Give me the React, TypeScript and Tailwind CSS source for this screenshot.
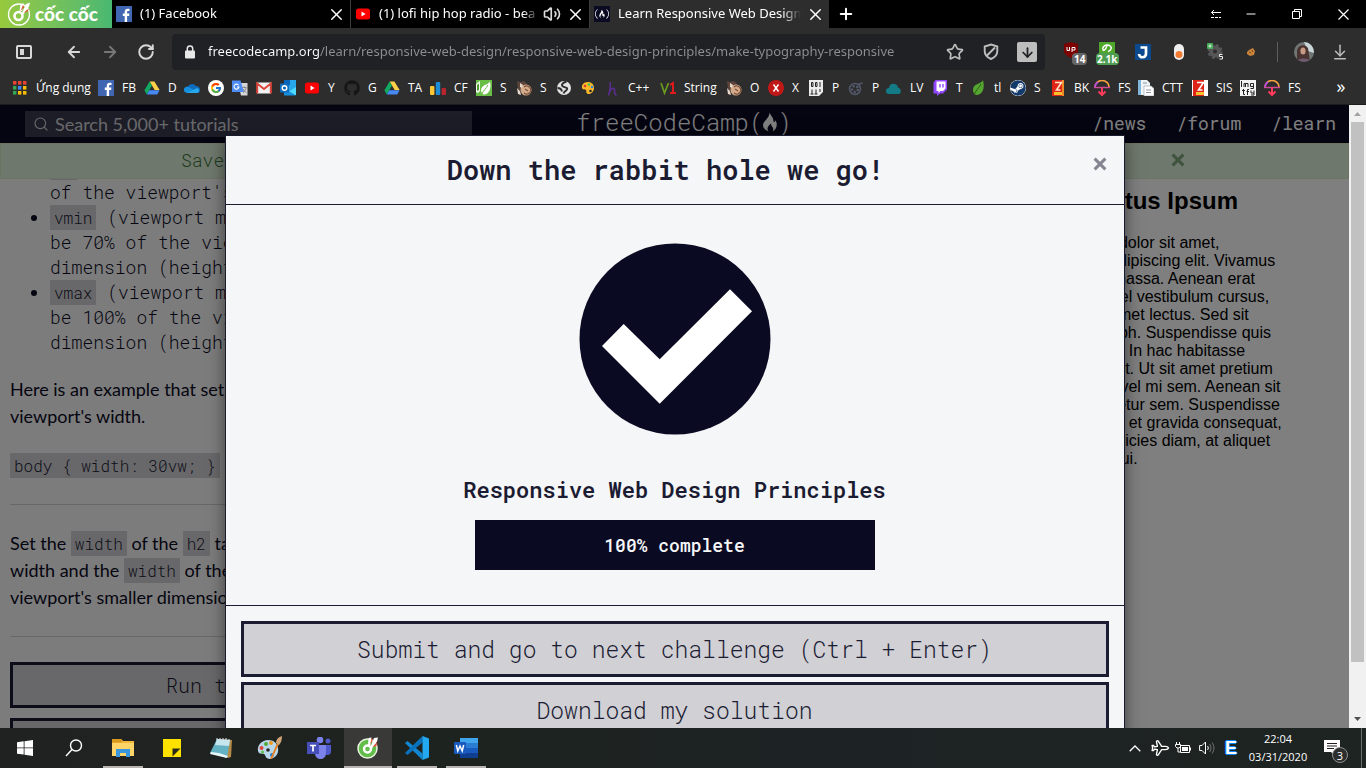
import React from "react";
import type { ReactNode } from "react";
import { FaFreeCodeCamp, FaGithub, FaSteam } from "react-icons/fa";
import { FcGoogle } from "react-icons/fc";
import { ArrowDown, ArrowDownToLine, ArrowLeft, ArrowRight, Minus, Plane, Plus, RotateCw, Search, Star, Volume2, X } from "lucide-react";

/* ---------- small drawings ---------- */

const CocMark = () => (
  <svg width="24" height="24" viewBox="0 0 24 24" aria-hidden="true">
    <circle cx="12" cy="12.500" r="10.500" fill="none" stroke="#fff" strokeWidth="1.300" />
    <circle cx="11.500" cy="14" r="4" fill="none" stroke="#fff" strokeWidth="2.600" />
    <path d="M12.500 9.500 13.500 2 17 1.600 15 9z" fill="#fff" />
    <path d="M15 11 19 2l4-1.500-1 4-5.500 8z" fill="#fff" />
    <path d="M13.500 9 16 3l1 2zM16.500 11 22 6.500l-1.500 3z" fill="#e8402c" />
  </svg>
);

const Facebook = () => (
  <svg width="16" height="16" viewBox="0 0 16 16" aria-hidden="true">
    <rect width="16" height="16" fill="#4267b2" />
    <path d="M8.700 16V10H6.800V7.600h1.900V6c0-2 1.200-3.200 3-3.200.9 0 1.600.1 1.800.1v2.200h-1.200c-1 0-1.200.5-1.200 1.200v1.300h2.300L13.100 10h-2v6z" fill="#fff" />
  </svg>
);

const YouTube = () => (
  <svg width="16" height="16" viewBox="0 0 16 16" aria-hidden="true">
    <rect x="1" y="2.500" width="14" height="11" rx="2.500" fill="#f00" />
    <path d="M6.500 5.600 10.600 8 6.500 10.400z" fill="#fff" />
  </svg>
);

const Drive = () => (
  <svg width="16" height="16" viewBox="0 0 16 16" aria-hidden="true">
    <path d="M5.600 1.500h4.800L15.600 10h-4.900z" fill="#ffcf48" />
    <path d="M5.600 1.500 8 5.600 2.800 14.500 .4 10.300z" fill="#11a861" />
    <path d="M5.300 10.200h10.300L13.200 14.500H2.800z" fill="#4688f4" />
  </svg>
);

const AppsGrid = () => (
  <svg width="14" height="14" viewBox="0 0 14 14" aria-hidden="true">
    {["#ea4335", "#ea4335", "#ea4335", "#34a853", "#4285f4", "#fbbc05", "#34a853", "#fbbc05", "#fbbc05"].map((c, i) => (
      <rect key={i} x={(i % 3) * 5} y={Math.floor(i / 3) * 5} width="3.400" height="3.600" fill={c} />
    ))}
  </svg>
);

const OneDrive = () => (
  <svg width="16" height="16" viewBox="0 0 16 16" aria-hidden="true">
    <path d="M4 6.600A4.600 4.600 0 0 1 12 6a3.800 3.800 0 0 1 2.600 6.800H4z" fill="#0f6cbd" />
    <path d="M3.200 13a3.200 3.200 0 1 1 1.400-6l9.800 5.800z" fill="#1490df" />
    <path d="M3 13l7-3.500 3-1.600a2.700 2.700 0 0 1 .3 5.100z" fill="#28a8ea" />
  </svg>
);

const Google = () => (
  <svg width="16" height="16" viewBox="0 0 16 16" aria-hidden="true">
    <circle cx="8" cy="8" r="8" fill="#fff" />
    <g transform="translate(2 2)">
      <FcGoogle size={12} />
    </g>
  </svg>
);

const Translate = () => (
  <svg width="16" height="16" viewBox="0 0 16 16" aria-hidden="true">
    <path d="M6 3h9.500v12.500H9z" fill="#d6d6d6" />
    <path d="M0 .5h8.500L12 12H0z" fill="#4e8df5" />
    <path d="M6.600 5.200A2.500 2.500 0 1 0 7 7H5" fill="none" stroke="#fff" strokeWidth="1.100" />
    <path d="M10.500 7.500h4M12.500 6.500v1M11 12.500c2-1 2.800-2.500 3-5M11.500 9c.7 2 1.500 3 3 3.800" fill="none" stroke="#7a7a7a" strokeWidth=".8" />
  </svg>
);

const Gmail = () => (
  <svg width="16" height="16" viewBox="0 0 16 16" aria-hidden="true">
    <rect x="1" y="2.500" width="14" height="11" fill="#f2f2f2" />
    <path d="M1.200 13.500V3.500L8 9l6.800-5.500v10" fill="none" stroke="#db4437" strokeWidth="2" />
  </svg>
);

const Outlook = () => (
  <svg width="16" height="16" viewBox="0 0 16 16" aria-hidden="true">
    <rect x="4" y="0" width="12" height="15" fill="#28a8ea" />
    <path d="M4 0h6v5H4z" fill="#0364b8" />
    <path d="M16 7v8H4z" fill="#50d9ff" />
    <path d="M4 8l12 7.500H4z" fill="#1490df" />
    <rect x="0" y="3.500" width="9" height="9" fill="#0f6cbd" />
    <circle cx="4.500" cy="8" r="2.300" fill="none" stroke="#fff" strokeWidth="1.400" />
  </svg>
);

const Bars = () => (
  <svg width="16" height="16" viewBox="0 0 16 16" aria-hidden="true">
    <rect x="0" y="6" width="4.400" height="9" rx="1" fill="#ffc736" />
    <rect x="5.800" y="2" width="4.400" height="13" rx="1" fill="#1f8dd6" />
    <rect x="11.600" y="8" width="4.400" height="7" rx="1" fill="#b8252f" />
  </svg>
);

const Spring = () => (
  <svg width="16" height="16" viewBox="0 0 16 16" aria-hidden="true">
    <rect width="16" height="16" fill="#68bd45" />
    <path d="M0 4l4-3v10l-2 2-2-1z" fill="#f2f8ee" />
    <path d="M1 5 3 3.500v6.500l-2 1z" fill="#4f9a32" />
    <path d="M14 1.500C12.500 5 6 4 5 10c0 2 1 4 2.500 4.500 6 0 8-6.500 6.500-13z" fill="#fff" />
    <path d="M5.500 14.500C7.500 10 10 9 12 5" stroke="#68bd45" fill="none" />
  </svg>
);

const Snail = () => (
  <svg width="16" height="16" viewBox="0 0 16 16" aria-hidden="true">
    <path d="M1 1l3 1 4-1 4 4-5 7-5-3z" fill="#5d443b" />
    <circle cx="10" cy="10" r="5.500" fill="#d3ab8a" />
    <path d="M8 7a4 4 0 1 1 0 6M9 9l3 2" fill="none" stroke="#7b513a" strokeWidth="1.200" />
    <path d="M1 8l3 3 1 4-3-1zM4 3l3 2-1 3-2-1z" fill="#e8d7ca" />
  </svg>
);

const Globe = () => (
  <svg width="16" height="16" viewBox="0 0 16 16" aria-hidden="true">
    <circle cx="8" cy="8" r="7" fill="#e2e2e2" />
    <path d="M10.500 1.500C6 3 5 5 7 6.500c2.500 1.200 5 1 4 3-1 1.500-3 2-3.500 4M1.500 8c2 0 4 1 4.500 3.500" fill="none" stroke="#2d2d2d" strokeWidth="1.900" />
  </svg>
);

const Palette = () => (
  <svg width="16" height="16" viewBox="0 0 16 16" aria-hidden="true">
    <path d="M8 2C3.500 2 1.500 5 2 8c.5 2 3 1 4 2 1 1-1 3 2 4 3 .5 6-2.500 6-6s-2.500-6-6-6z" fill="#fbb829" />
    <circle cx="5" cy="6" r="1.200" fill="#d33" />
    <circle cx="9" cy="4.500" r="1.200" fill="#3c5" />
    <circle cx="12" cy="7" r="1.200" fill="#28d" />
    <circle cx="10.500" cy="11" r="1.300" fill="#2d2d2d" />
  </svg>
);

const Hook = () => (
  <svg width="16" height="16" viewBox="0 0 16 16" aria-hidden="true">
    <path d="M6 2C7 7 6 11 4.500 15.500M5.500 12C8 7 11 7.500 10.500 10.500c-.3 2 .5 4 2 5" fill="none" stroke="#5c2d91" strokeWidth="1.600" />
  </svg>
);

const VOne = () => (
  <svg width="16" height="16" viewBox="0 0 16 16" aria-hidden="true">
    <path d="M1 3l3.500 10L8.500 3" fill="none" stroke="#6b9b1e" strokeWidth="1.700" />
    <path d="M10 5l3-2v10M10 13h6" fill="none" stroke="#e01a1a" strokeWidth="2" />
  </svg>
);

const RedX = () => (
  <svg width="16" height="16" viewBox="0 0 16 16" aria-hidden="true">
    <circle cx="8" cy="8" r="8" fill="#c21717" />
    <path d="M5.500 4.500l5 7M10.500 4.500l-5 7" stroke="#fff" strokeWidth="1.500" />
  </svg>
);

const Binary = () => (
  <svg width="16" height="16" viewBox="0 0 16 16" aria-hidden="true">
    <path d="M1 0h14v12l-4 4H1z" fill="#ececec" />
    <path d="M3.500 2.500h1.500v4H3.500zM7.500 2.500H9v4H7.500zM12 2v5M4 9.500v4.500M8 9.500v4.500M12 9v3M2.500 14h3M6.500 14h3" fill="none" stroke="#222" />
  </svg>
);

const Reel = () => (
  <svg width="16" height="16" viewBox="0 0 16 16" aria-hidden="true">
    <circle cx="7" cy="9" r="5.500" fill="none" stroke="#52586a" strokeWidth="1.500" />
    <circle cx="7" cy="9" r="3" fill="none" stroke="#52586a" strokeWidth="2.500" strokeDasharray="2.200 1.570" />
    <path d="M10 4.500 14.500 3" stroke="#52586a" strokeWidth="1.700" />
  </svg>
);

const Cloud = () => (
  <svg width="16" height="16" viewBox="0 0 16 16" aria-hidden="true">
    <path d="M3 14a3 3 0 0 1 0-6 4 4 0 0 1 5-4 4 4 0 0 1 4 3.500A3.500 3.500 0 0 1 13 14z" fill="#137b86" />
  </svg>
);

const Twitch = () => (
  <svg width="16" height="16" viewBox="0 0 16 16" aria-hidden="true">
    <path d="M3.500 0H15v9.500L11 13.500H8L5 16V13.500H1.500v-11z" fill="#9146ff" />
    <path d="M4.500 1.500h9V8.500l-2.500 2.500H8.500L6.500 13v-2h-2z" fill="#fff" />
    <path d="M8 4v3.500M11 4v3.500" stroke="#9146ff" strokeWidth="1.400" />
  </svg>
);

const Leaf = () => (
  <svg width="16" height="16" viewBox="0 0 16 16" aria-hidden="true">
    <path d="M13 0c-1 4-10 3-10 10 0 2 1 4 3 5 7 0 9-7 7-15z" fill="#55a630" />
    <path d="M4 15C6 10 9 8 11 4" stroke="#2d5d17" fill="none" />
  </svg>
);

const BookZ = ({ wide = false }: { wide?: boolean }) => (
  <svg width="16" height="16" viewBox="0 0 16 16" aria-hidden="true">
    <rect x={wide ? 0 : 2} y="0" width={wide ? 16 : 12} height="16" fill={wide ? "#fff" : "#f08a24"} />
    <rect x={wide ? 1 : 2} y="0" width={wide ? 11 : 10} height="16" fill="#df2418" />
    <path d="M5 2.500h6.500l-5 7.500h4" fill="none" stroke={wide ? "#fff" : "#ffe9c8"} strokeWidth="1.600" />
    <rect x="4" y="12" width="8" height="3" fill="#f6c12c" />
  </svg>
);

const Umbrella = () => (
  <svg width="16" height="16" viewBox="0 0 16 16" aria-hidden="true">
    <path d="M1 7a7 6.500 0 0 1 14 0" fill="none" stroke="#f8a13c" strokeWidth="1.600" />
    <path d="M1 7a7 6.500 0 0 1 3-5" fill="none" stroke="#b94ae0" strokeWidth="1.600" />
    <path d="M0 7.500h16" stroke="#d04a9a" strokeWidth="1.400" />
    <path d="M8 7.500v6M4.500 11.500 8 15l3.500-3.500" fill="none" stroke="#ff3b5c" strokeWidth="2" />
  </svg>
);

const Pages = () => (
  <svg width="16" height="16" viewBox="0 0 16 16" aria-hidden="true">
    <path d="M0 0h9l3 3v12H0z" fill="#eef3f6" />
    <rect width="3" height="15" fill="#7fb6d9" />
    <path d="M6 6h7l3 2.500V16H6z" fill="#fff" stroke="#a9b4bb" strokeWidth=".8" />
    <path d="M8 10h5M8 12.500h5M5 3h4" stroke="#8b99a3" />
  </svg>
);

const Lmgtfy = () => (
  <svg width="16" height="16" viewBox="0 0 16 16" aria-hidden="true">
    <rect width="16" height="16" fill="#f3f3f3" />
    <path d="M1.500 1v6M4 7V3.500h1.500V7M5.500 3.500H8V7M10.500 3.500h3V8.500h-3M10.500 3.500V6.500h3M2 10.500h3M3.500 9v5.500h1.500M9 9.500H7.500v5.500M6.500 11.500h2.500M11 10.500v2.500h3M14 10.500V15h-3" fill="none" stroke="#222" />
  </svg>
);

const Lock = () => (
  <svg width="10" height="14" viewBox="0 0 10 14" aria-hidden="true">
    <path d="M2.300 6V3.800a2.700 2.700 0 0 1 5.400 0V6" fill="none" stroke="#e8e8e8" strokeWidth="1.500" />
    <rect x="0" y="5.500" width="10" height="8" rx="1" fill="#e8e8e8" />
  </svg>
);

const SidebarIcon = () => (
  <svg width="16" height="14" viewBox="0 0 16 14" aria-hidden="true">
    <rect x="1" y="1" width="14" height="12" rx="1" fill="none" stroke="#d8d8d8" strokeWidth="2" />
    <rect x="4" y="4" width="4" height="6" fill="#d8d8d8" />
  </svg>
);

const ShieldOff = () => (
  <svg width="16" height="18" viewBox="0 0 16 18" aria-hidden="true">
    <path d="M8 1.500 14.300 3.500V8c0 4-2.500 6.500-6.300 8-3.800-1.500-6.300-4-6.300-8V3.500z" fill="none" stroke="#bdbdbd" strokeWidth="1.900" />
    <path d="M3.500 13 12 4.500" stroke="#bdbdbd" strokeWidth="1.900" />
  </svg>
);

const Gear = () => (
  <svg width="18" height="18" viewBox="0 0 18 18" aria-hidden="true">
    <circle cx="9" cy="8.500" r="4" fill="none" stroke="#565656" strokeWidth="4" />
    <circle cx="9" cy="8.500" r="6.500" fill="none" stroke="#565656" strokeWidth="2" strokeDasharray="3 2.100" />
    <rect x="1" y="0" width="6" height="6" rx="1" fill="#4dab5c" />
    <circle cx="4" cy="3" r="1.500" fill="#b6e8bd" />
    <path d="M16.500 11.500h-3v2h3v2.500h-3" stroke="#eee" fill="none" />
  </svg>
);

const Flame = () => (
  <svg width="14" height="20" viewBox="0 0 14 19" aria-hidden="true">
    <path d="M6.500 0c1 3 4 5 4 8.500 0 1 .2 1.500 1 1 .5-.3.500-1.200.2-2C13.500 9 14 11 13.700 13c-.3 2.500-1.700 4.500-4 6 .8-1.800.8-3.300-.5-4.700-.9-1-1.200-2-1-3.500-1.700 1.300-3.700 3.500-3.700 5.400 0 1 .3 1.900 1 2.800C2 17.500 0 15.500 0 12.800 0 8.500 6.500 6 6.500 0z" fill="#fff" />
  </svg>
);

/* ---------- browser chrome ---------- */

type TabProps = { icon: ReactNode; title: string; active?: boolean; sound?: boolean };

const Tab = ({ icon, title, active, sound }: TabProps) => (
  <div className={`flex h-7 w-[239px] min-w-0 shrink items-center gap-2 pr-[7px] pl-1 ${active ? "bg-[#2d2d2d]" : "border-r border-[#3c3c3c] bg-black"}`}>
    <button className="flex min-w-0 flex-1 items-center gap-2 text-left">
      <span className="shrink-0">{icon}</span>
      <span className="flex-1 overflow-hidden mask-r-from-90% whitespace-nowrap">{title}</span>
    </button>
    {sound && <Volume2 size={18} strokeWidth={2.200} className="-ml-1 shrink-0 text-[#dcdcdc]" />}
    <button aria-label={`Close ${title}`} className="shrink-0">
      <X size={19} strokeWidth={1.800} className="-mx-[3px]" />
    </button>
  </div>
);

const TabStrip = () => (
  <header className="flex h-7 shrink-0 items-center bg-black font-['Noto_Sans',sans-serif] text-[13px] text-white">
    <button aria-label="Cốc Cốc menu" className="flex h-7 w-28 shrink-0 items-center gap-1 bg-linear-to-r from-[#97c93d] to-[#48b871] pl-[7px]">
      <CocMark />
      <span className="font-['Lato',sans-serif] text-[19px] leading-7 font-black whitespace-nowrap">cốc cốc</span>
    </button>
    <Tab icon={<Facebook />} title="(1) Facebook" />
    <Tab icon={<YouTube />} title="(1) lofi hip hop radio - bea" sound />
    <Tab
      icon={
        <span className="flex size-4 items-center justify-center bg-[#0a0a23]">
          <FaFreeCodeCamp size={14} />
        </span>
      }
      title="Learn Responsive Web Design"
      active
    />
    <button aria-label="New tab" className="ml-2 shrink-0">
      <Plus size={18} strokeWidth={2.600} />
    </button>
    <div className="ml-auto flex shrink-0 items-center">
      <button aria-label="Tab options" className="flex w-6 justify-center">
        <svg width="12" height="10" viewBox="0 0 12 10" aria-hidden="true">
          <path d="M1.500 3.500H11M4 1 1.500 3.500 4 6" fill="none" stroke="#fff" />
          <path d="M1 8.500h10" stroke="#fff" strokeDasharray="3 1" />
        </svg>
      </button>
      <button aria-label="Minimize" className="flex w-[46px] justify-center">
        <Minus size={14} strokeWidth={1.700} />
      </button>
      <button aria-label="Restore" className="flex w-[46px] justify-center">
        <svg width="10" height="10" viewBox="0 0 10 10" aria-hidden="true">
          <path d="M.500 2.500h7v7h-7zM2.500 2.500v-2h7v7h-2" fill="none" stroke="#fff" />
        </svg>
      </button>
      <button aria-label="Close window" className="flex w-[46px] justify-center">
        <svg width="11" height="11" viewBox="0 0 11 11" aria-hidden="true">
          <path d="M.500 .500l10 10M10.500 .500l-10 10" stroke="#fff" strokeWidth="1.200" />
        </svg>
      </button>
    </div>
  </header>
);

const ToolButton = ({ label, children }: { label: string; children: ReactNode }) => (
  <button aria-label={label} className="relative flex h-9 w-9 shrink-0 items-center justify-center">
    {children}
  </button>
);

const Toolbar = () => (
  <div className="flex h-12 shrink-0 items-center bg-[#2d2d2d] pr-2 text-[#d8d8d8]">
    <button aria-label="Sidebar" className="mr-2 flex w-12 shrink-0 justify-center">
      <SidebarIcon />
    </button>
    <ToolButton label="Back">
      <ArrowLeft size={18} strokeWidth={2.400} />
    </ToolButton>
    <ToolButton label="Forward">
      <ArrowRight size={18} strokeWidth={2.400} className="text-[#777]" />
    </ToolButton>
    <ToolButton label="Reload">
      <RotateCw size={18} strokeWidth={2.600} />
    </ToolButton>
    <div className="ml-2 flex h-9 min-w-0 flex-1 items-center rounded bg-[#202124] pr-2 pl-[13px]">
      <Lock />
      <input
        aria-label="Address"
        readOnly
        value="freecodecamp.org/learn/responsive-web-design/responsive-web-design-principles/make-typography-responsive"
        className="ml-[13px] min-w-0 flex-1 bg-[linear-gradient(90deg,#fff_111px,#8c8f93_111px)] bg-clip-text font-['Noto_Sans',sans-serif] text-[13px] text-transparent outline-none"
      />
      <button aria-label="Bookmark" className="flex w-9 justify-center">
        <Star size={18} strokeWidth={2.200} className="text-[#bdbdbd]" />
      </button>
      <button aria-label="Blocking" className="flex w-9 justify-center">
        <ShieldOff />
      </button>
      <button aria-label="Save media" className="ml-2 flex size-5 items-center justify-center rounded-xs bg-[#bdbdbd] text-[#202124]">
        <ArrowDown size={15} strokeWidth={2.800} />
      </button>
    </div>
    <div className="ml-2 flex shrink-0 items-center">
      <ToolButton label="Blocker">
        <svg width="16" height="16" viewBox="0 0 16 16" className="-mt-1" aria-hidden="true">
          <path d="M8 0l7 2v7c0 3-4 5.500-7 7-3-1.500-7-4-7-7V2z" fill="#7d0000" />
          <path d="M4 5v3.500h2.500V5M9 10V5.500h3v2.500H9" fill="none" stroke="#fff" />
        </svg>
        <span className="absolute top-[19px] left-[19px] rounded-sm bg-[#666] px-0.5 text-[10px] leading-3 font-bold text-white">14</span>
      </ToolButton>
      <ToolButton label="Reader">
        <svg width="16" height="16" viewBox="0 0 16 16" className="-mt-1" aria-hidden="true">
          <rect width="16" height="16" fill="#4ea72a" />
          <path d="M8 3.500C6.500 8 5 9 4 8c-1-2 1-5 4-5s5 2 4 4c-.5 1.500-1.500 2-3 2.500" fill="none" stroke="#fff" strokeWidth="1.500" />
        </svg>
        <span className="absolute top-[19px] left-[7px] rounded-sm bg-[#4f9d53] px-px text-[10px] leading-3 font-bold text-white">2.1k</span>
      </ToolButton>
      <ToolButton label="J extension">
        <svg width="16" height="16" viewBox="0 0 16 16" aria-hidden="true">
          <rect width="16" height="16" fill="#0b4a8f" />
          <path d="M5.500 3.500H11v6a3.500 3.500 0 0 1-7 .5" fill="none" stroke="#fff" strokeWidth="2.700" />
        </svg>
      </ToolButton>
      <ToolButton label="Toggle extension">
        <svg width="10" height="16" viewBox="0 0 10 16" aria-hidden="true">
          <rect width="10" height="16" rx="5" fill="#eee" />
          <circle cx="5" cy="10.500" r="3.500" fill="#f47b30" />
        </svg>
      </ToolButton>
      <ToolButton label="Settings extension">
        <Gear />
      </ToolButton>
      <ToolButton label="Cookie extension">
        <svg width="10" height="10" viewBox="0 0 10 10" aria-hidden="true">
          <path d="M1 5l2-2 4-2 2 3-1 4-4 1-3-2z" fill="#c9843c" />
          <path d="M3 5l2 1M6 3l1 2" stroke="#7d4a17" />
        </svg>
      </ToolButton>
      <span className="mx-2 h-5 w-px bg-[#5e5e5e]" />
      <ToolButton label="Profile">
        <svg width="20" height="20" viewBox="0 0 20 20" aria-hidden="true">
          <clipPath id="avatar">
            <circle cx="10" cy="10" r="10" />
          </clipPath>
          <g clipPath="url(#avatar)">
            <rect width="20" height="20" fill="#6f7674" />
            <path d="M10 0h10v11l-6-2z" fill="#c9d6d8" />
            <path d="M3 20V9a6 6 0 0 1 11-3l2 14z" fill="#4a3432" />
            <ellipse cx="9" cy="9" rx="2.600" ry="3.500" fill="#c79a86" />
            <path d="M2 20c1-4 13-5 15 0z" fill="#6d5a70" />
          </g>
        </svg>
      </ToolButton>
      <ToolButton label="Downloads">
        <ArrowDownToLine size={18} className="text-[#bdbdbd]" />
      </ToolButton>
    </div>
  </div>
);

const BOOKMARKS: { icon: ReactNode; label?: string; name: string; width: string }[] = [
  { icon: <Facebook />, label: "FB", name: "Facebook", width: "w-[46px]" },
  { icon: <Drive />, label: "D", name: "Drive", width: "w-10" },
  { icon: <OneDrive />, name: "OneDrive", width: "w-6" },
  { icon: <Google />, name: "Google", width: "w-6" },
  { icon: <Translate />, name: "Translate", width: "w-6" },
  { icon: <Gmail />, name: "Gmail", width: "w-6" },
  { icon: <Outlook />, name: "Outlook", width: "w-6" },
  { icon: <YouTube />, label: "Y", name: "YouTube", width: "w-10" },
  { icon: <FaGithub size={16} className="text-[#161616]" />, label: "G", name: "GitHub", width: "w-10" },
  { icon: <Drive />, label: "TA", name: "Drive TA", width: "w-[46px]" },
  { icon: <Bars />, label: "CF", name: "Codeforces", width: "w-[46px]" },
  { icon: <Spring />, label: "S", name: "Spring", width: "w-10" },
  { icon: <Snail />, label: "S", name: "Snail", width: "w-10" },
  { icon: <Globe />, name: "Globe", width: "w-6" },
  { icon: <Palette />, name: "Palette", width: "w-6" },
  { icon: <Hook />, label: "C++", name: "C++", width: "w-14" },
  { icon: <VOne />, label: "String", name: "String", width: "w-[66px]" },
  { icon: <Snail />, label: "O", name: "O", width: "w-[42px]" },
  { icon: <RedX />, label: "X", name: "X", width: "w-10" },
  { icon: <Binary />, label: "P", name: "Programming", width: "w-10" },
  { icon: <Reel />, label: "P", name: "Films", width: "w-[38px]" },
  { icon: <Cloud />, label: "LV", name: "LV", width: "w-[46px]" },
  { icon: <Twitch />, label: "T", name: "Twitch", width: "w-[38px]" },
  { icon: <Leaf />, label: "tl", name: "tl", width: "w-10" },
  { icon: <FaSteam size={16} className="rounded-full bg-white text-[#123a6b]" />, label: "S", name: "Steam", width: "w-10" },
  { icon: <BookZ />, label: "BK", name: "BK", width: "w-11" },
  { icon: <Umbrella />, label: "FS", name: "FS", width: "w-11" },
  { icon: <Pages />, label: "CTT", name: "CTT", width: "w-[54px]" },
  { icon: <BookZ wide />, label: "SIS", name: "SIS", width: "w-12" },
  { icon: <Lmgtfy />, name: "lmgtfy", width: "w-6" },
  { icon: <Umbrella />, label: "FS", name: "FS 2", width: "w-11" },
];

const BookmarkBar = () => (
  <nav aria-label="Bookmarks" className="flex h-[29px] shrink-0 border-b border-[#1c1c1c] bg-[#2d2d2d] pb-1 pl-[13px] text-[12px] leading-6 whitespace-nowrap text-white">
    <a href="#apps" className="flex w-[85px] shrink-0 items-center gap-[9px]">
      <AppsGrid />
      Ứng dụng
    </a>
    <div className="flex min-w-0 flex-1 overflow-hidden">
      {BOOKMARKS.map((b) => (
        <a key={b.name} href="#bookmark" aria-label={b.name} className={`flex shrink-0 items-center gap-2 ${b.width}`}>
          <span className="shrink-0">{b.icon}</span>
          {b.label}
        </a>
      ))}
    </div>
    <button aria-label="More bookmarks" className="w-[50px] shrink-0 pb-1 text-[18px] leading-5">
      »
    </button>
  </nav>
);

/* ---------- challenge page ---------- */

const Code = ({ children }: { children: ReactNode }) => (
  <code className="inline-block bg-[#d0d0d5] px-1 font-['Roboto_Mono','Liberation_Mono',monospace] text-[16px] leading-[25px] font-[350] text-[#1b1b32]">{children}</code>
);

const PageButton = ({ children }: { children: ReactNode }) => (
  <button className="block h-[46px] w-full border-3 border-[#1b1b32] bg-[#d0d0d5] font-['Roboto_Mono','Liberation_Mono',monospace] text-[20px] font-[350] text-[#1b1b32]">{children}</button>
);

const Instructions = () => (
  <section className="-mt-6 w-[488px] shrink-0 bg-[#f9f9fa] px-[10px] whitespace-nowrap">
    <ul className="list-disc pl-10 font-['Roboto_Mono','Liberation_Mono',monospace] leading-[25px] font-[350]">
      <li>
        <Code>vh</Code> (viewport height): 3vh would be 3%
        <br />
        of the viewport's height.
      </li>
      <li>
        <Code>vmin</Code> (viewport minimum): 70vmin would
        <br />
        be 70% of the viewport's smaller
        <br />
        dimension (height or width).
      </li>
      <li>
        <Code>vmax</Code> (viewport maximum): 100vmax would
        <br />
        be 100% of the viewport's bigger
        <br />
        dimension (height or width).
      </li>
    </ul>
    <p className="mt-[21px]">
      Here is an example that sets a body tag to 30% of the
      <br />
      viewport's width.
    </p>
    <p className="mt-[22px]">
      <Code>body {"{ width: 30vw; }"}</Code>
    </p>
    <hr className="mt-[25px] border-[#d0d0d5]" />
    <p className="mt-[25px]">
      Set the <Code>width</Code> of the <Code>h2</Code> tag to 80% of the viewport's
      <br />
      width and the <Code>width</Code> of the paragraph as 75% of the
      <br />
      viewport's smaller dimension.
    </p>
    <hr className="my-[25px] border-[#d0d0d5]" />
    <div className="flex flex-col gap-[10px]">
      <PageButton>Run the Tests</PageButton>
      <PageButton>Reset All Code</PageButton>
    </div>
  </section>
);

const PREVIEW_LINES = [
  "Lorem ipsum dolor sit amet,",
  "consectetur adipiscing elit. Vivamus",
  "quis tempus massa. Aenean erat",
  "nisl, gravida vel vestibulum cursus,",
  "interdum sit amet lectus. Sed sit",
  "amet quam nibh. Suspendisse quis",
  "tincidunt nulla. In hac habitasse",
  "platea dictumst. Ut sit amet pretium",
  "nisl. Vivamus vel mi sem. Aenean sit",
  "amet consectetur sem. Suspendisse",
  "pretium, purus et gravida consequat,",
  "nunc ligula ultricies diam, at aliquet",
  "velit libero a dui.",
];

const Preview = () => (
  <aside className="w-[335px] shrink-0 bg-white px-2 pt-2 font-['Liberation_Sans',sans-serif] text-[16px] leading-[18px] whitespace-nowrap text-black">
    <h2 className="text-[24px] leading-7 font-bold">Importantus Ipsum</h2>
    <p className="mt-[19px]">
      {PREVIEW_LINES.map((line) => (
        <span key={line} className="block">
          {line}
        </span>
      ))}
    </p>
  </aside>
);

const SiteHeader = () => (
  <div className="grid h-[38px] shrink-0 grid-cols-[35%_1fr_35%] items-center bg-[#0a0a23] font-['Roboto_Mono','Liberation_Mono',monospace] text-white">
    <label className="ml-[25px] flex h-[26px] items-center gap-[6px] bg-[#3b3b4f] pl-2">
      <Search size={16} strokeWidth={1.700} className="shrink-0 text-[#d0d0d5]" />
      <input
        aria-label="Search"
        placeholder="Search 5,000+ tutorials"
        className="min-w-0 flex-1 font-['Lato',sans-serif] text-[18px] leading-6 outline-none placeholder:text-[#d0d0d5]"
      />
    </label>
    <a href="#home" className="flex items-center justify-center pb-1 pl-[19px] text-[24px] leading-8 font-light">
      freeCodeCamp(
      <Flame />)
    </a>
    <nav className="flex justify-end gap-[30px] pr-[13px] pb-0.5 leading-6">
      <a href="#news">/news</a>
      <a href="#forum">/forum</a>
      <a href="#learn">/learn</a>
    </nav>
  </div>
);

const ModalButton = ({ children }: { children: ReactNode }) => (
  <button className="block h-14 w-full border-3 border-[#1b1b32] bg-[#d0d0d5] text-[23px] font-[350] text-[#1b1b32]">{children}</button>
);

const CompletionModal = () => (
  <div className="absolute inset-0 z-20 overflow-hidden bg-black/50">
    <div
      role="dialog"
      aria-modal="true"
      aria-labelledby="modal-title"
      className="mx-auto mt-[30px] w-[900px] max-w-full border border-[#1b1b32] bg-[#f5f6f7] font-['Roboto_Mono','Liberation_Mono',monospace] text-[#1b1b32] shadow-[0_5px_15px_rgba(0,0,0,0.5)]"
    >
      <div className="flex h-[69px] items-center border-b border-[#1b1b32] px-[15px]">
        <h1 id="modal-title" className="flex-1 text-center text-[27px] leading-8 font-semibold">
          Down the rabbit hole we go!
        </h1>
        <button aria-label="Close" className="mb-3 flex w-[18px] justify-center text-[#858591]">
          <svg width="14" height="14" viewBox="0 0 13 13" aria-hidden="true">
            <path d="M1.500 1.500l10 10M11.500 1.500l-10 10" stroke="currentColor" strokeWidth="2.800" />
          </svg>
        </button>
      </div>
      <div className="flex flex-col items-center border-b border-[#1b1b32] pt-[38px] pb-[35px]">
        <svg width="192" height="192" viewBox="579 243 192 192" role="img" aria-label="Passed">
          <circle cx="675" cy="339" r="95.500" fill="#0a0a23" />
          <path d="M730 289.300 752 311.300 659.700 403.700 602 346 623.700 324 659.700 359.300z" fill="#fff" />
        </svg>
        <p className="mt-10 text-[22px] leading-[30px] font-semibold">Responsive Web Design Principles</p>
        <div className="mt-[15px] w-[400px] max-w-full bg-[#0a0a23] text-center leading-[50px] font-medium text-[#f5f6f7]">100% complete</div>
      </div>
      <div className="flex flex-col gap-[5px] p-[15px]">
        <ModalButton>Submit and go to next challenge (Ctrl + Enter)</ModalButton>
        <ModalButton>Download my solution</ModalButton>
      </div>
    </div>
  </div>
);

const ChallengePage = () => (
  <div className="flex min-h-0 flex-1 overflow-hidden">
    <main className="relative flex min-w-0 flex-1 flex-col overflow-hidden bg-[#f9f9fa] font-['Lato',sans-serif] text-[18px] leading-[27px] text-[#0a0a23]">
      <SiteHeader />
      <div className="z-10 flex h-9 shrink-0 items-center justify-between border border-[#d6e9c6] bg-[#dff0d8] pr-[163px] pb-0.5 pl-[180px] font-['Roboto_Mono','Liberation_Mono',monospace] font-[350] text-[#3c763d]">
        <p>Saved!</p>
        <button aria-label="Dismiss">
          <svg width="14" height="14" viewBox="0 0 13 13" aria-hidden="true">
            <path d="M1.500 1.500l10 10M11.500 1.500l-10 10" stroke="#7fa67c" strokeWidth="2.800" />
          </svg>
        </button>
      </div>
      <div className="flex min-h-0 flex-1">
        <Instructions />
        <div className="flex-1 bg-white" />
        <Preview />
      </div>
      <CompletionModal />
    </main>
    <div className="flex w-[17px] shrink-0 flex-col items-center bg-[#f1f1f1]">
      <svg width="17" height="17" viewBox="0 0 17 17" aria-hidden="true">
        <path d="M5 11h7L8.500 7z" fill="#a3a3a3" />
      </svg>
      <div className="mb-[49px] w-[13px] flex-1 bg-[#c1c1c1]" />
      <svg width="17" height="17" viewBox="0 0 17 17" aria-hidden="true">
        <path d="M5 6h7l-3.500 4z" fill="#505050" />
      </svg>
    </div>
  </div>
);

/* ---------- taskbar ---------- */

const TASKS: { name: string; icon: ReactNode; state?: "open" | "active" }[] = [
  {
    name: "Start",
    icon: (
      <svg width="16" height="16" viewBox="0 0 16 16" aria-hidden="true">
        <path d="M0 2.300 6.700 1.300V7.500H0zM7.500 1.200 16 0v7.500H7.500zM0 8.300h6.700v6.300L0 13.700zM7.500 8.300H16V16l-8.500-1.200z" fill="#fff" />
      </svg>
    ),
  },
  {
    name: "Search",
    icon: (
      <svg width="18" height="18" viewBox="0 0 18 18" aria-hidden="true">
        <circle cx="11" cy="6.500" r="5.500" fill="none" stroke="#fff" strokeWidth="1.400" />
        <path d="M7 10.500 1 17" stroke="#fff" strokeWidth="1.400" />
      </svg>
    ),
  },
  {
    name: "File Explorer",
    state: "open",
    icon: (
      <svg width="22" height="18" viewBox="0 0 22 18" aria-hidden="true">
        <path d="M0 0h9l2 2h11v15H0z" fill="#f5b83d" />
        <path d="M0 0h9l2 2-2 1.500H0z" fill="#d89a1c" />
        <rect y="4" width="22" height="13" fill="#ffd567" />
        <path d="M4 18v-8h14v8h-4v-4H8v4z" fill="#3a96dd" />
      </svg>
    ),
  },
  {
    name: "Sticky Notes",
    icon: (
      <svg width="18" height="18" viewBox="0 0 18 18" aria-hidden="true">
        <path d="M0 0h18v18H0z" fill="#ffe100" />
        <path d="M9.500 17.500V9.500h8z" fill="#2b2a18" />
      </svg>
    ),
  },
  {
    name: "Notepad",
    icon: (
      <svg width="22" height="22" viewBox="0 0 22 22" aria-hidden="true">
        <path d="M8 2l14 1-1 17-3 1z" fill="#b58b45" />
        <path d="M7 2l13 1-3 18L0 16z" fill="#62b2c4" />
        <path d="M7 2l13 1-1 6-14-1z" fill="#c4e6ec" />
        <path d="M1 15l8 1 9 3-1 2L0 17z" fill="#e9f6f8" />
        <path d="M7 1v2M10 1v2M13 1v3M16 1v3M19 2v2" stroke="#e5e5e5" />
      </svg>
    ),
  },
  {
    name: "Paint",
    icon: (
      <svg width="26" height="24" viewBox="0 0 26 24" aria-hidden="true">
        <path d="M11 4C5 4 0 9 1 15c1 4 4 2 6 3s1 5 6 5c6-1 9-6 8-11S17 4 11 4z" fill="#b9d8ea" />
        <circle cx="4.500" cy="12" r="2" fill="#e0443a" />
        <circle cx="9" cy="8" r="2" fill="#51ab3a" />
        <circle cx="14" cy="7" r="2" fill="#f19a1f" />
        <circle cx="5.500" cy="16" r="1.500" fill="#5ac146" />
        <circle cx="11" cy="14" r="1.800" fill="#222" />
        <circle cx="15" cy="19" r="2" fill="#2378d4" />
        <path d="M13 23 20 7l2 1-7 15z" fill="#e2832c" />
        <path d="M19 7c0-4 3-6 6-7 0 4-1 7-3 9z" fill="#d1a674" />
      </svg>
    ),
  },
  {
    name: "Teams",
    icon: (
      <svg width="24" height="22" viewBox="0 0 24 22" aria-hidden="true">
        <circle cx="13" cy="3" r="3.300" fill="#7b83eb" />
        <circle cx="21" cy="4" r="2.500" fill="#5059c9" />
        <path d="M17 8h7v7c0 3-4 4-6 2z" fill="#5059c9" />
        <path d="M8 8h11v8c0 8-11 8-11 0z" fill="#7b83eb" />
        <rect y="5" width="12" height="12" fill="#464eb8" />
        <path d="M3 8.500h6M6 8.500V14.500" stroke="#fff" strokeWidth="1.700" />
      </svg>
    ),
  },
  {
    name: "Cốc Cốc",
    state: "active",
    icon: (
      <svg width="22" height="22" viewBox="0 0 22 22" aria-hidden="true">
        <circle cx="10.500" cy="11.500" r="9.500" fill="#62bd4b" stroke="#e9f5df" strokeWidth="1.500" />
        <circle cx="10.500" cy="12" r="3.500" fill="#62bd4b" stroke="#fff" strokeWidth="2.400" />
        <path d="M11 8.500 11.500 1l3-.5-1 8zM13.500 10 17 1l4-.5-1 4-5 7z" fill="#fff" />
        <path d="M13 8l1.500-6.500 1.500 1zM15.500 10 20 5l-.5 4z" fill="#e8503c" />
      </svg>
    ),
  },
  {
    name: "Visual Studio Code",
    state: "open",
    icon: (
      <svg width="24" height="24" viewBox="0 0 24 24" aria-hidden="true">
        <path d="M17.500 17.500 2.500 5 0 7l17.500 17z" fill="#1286d0" />
        <path d="M17.500 6.500 2.500 19 0 17 17.500 0z" fill="#0a72bd" />
        <path d="M17.500 0 24 2.500v19L17.500 24z" fill="#23a9f2" />
      </svg>
    ),
  },
  {
    name: "Word",
    state: "open",
    icon: (
      <svg width="24" height="20" viewBox="0 0 24 20" aria-hidden="true">
        <rect x="6" width="18" height="20" rx="1" fill="#2b7cd3" />
        <path d="M6 0h18v5H6z" fill="#41a5ee" />
        <path d="M6 10h18v5H6z" fill="#185abd" />
        <path d="M6 15h18v5H6z" fill="#103f91" />
        <rect y="4" width="12" height="12" rx="1" fill="#185abd" />
        <path d="M2.300 7l1.500 6L6 8l2.200 5 1.500-6" fill="none" stroke="#fff" strokeWidth="1.500" />
      </svg>
    ),
  },
];

const Taskbar = () => (
  <footer className="flex h-10 shrink-0 items-stretch bg-[linear-gradient(90deg,#202221,#1d231f_35%,#1d2224_60%,#1e2421)] text-white">
    <div className="flex gap-px pl-px">
      {TASKS.map((t) => (
        <button key={t.name} aria-label={t.name} className={`flex w-12 flex-col items-center ${t.state === "active" ? "bg-[#393938]" : ""}`}>
          <span className="flex flex-1 items-center">{t.icon}</span>
          {t.state && <span className={`-mt-0.5 h-0.5 bg-[#b9b5b2] ${t.state === "active" ? "w-12" : "w-10"}`} />}
        </button>
      ))}
    </div>
    <div className="ml-auto flex items-center">
      <button aria-label="Hidden icons" className="flex w-6 justify-center">
        <svg width="12" height="7" viewBox="0 0 12 7" aria-hidden="true">
          <path d="M.700 6.300 6 1l5.300 5.300" fill="none" stroke="#fff" strokeWidth="1.300" />
        </svg>
      </button>
      <button aria-label="Airplane mode" className="flex w-6 justify-center">
        <Plane size={18} strokeWidth={1.800} className="rotate-45" />
      </button>
      <button aria-label="Battery" className="flex w-6 justify-center">
        <svg width="16" height="12" viewBox="0 0 16 12" aria-hidden="true">
          <path d="M5.500 3.500h9v7h-9zM15.500 5.500v3" fill="none" stroke="#fff" />
          <rect x="7" y="5" width="6" height="4" fill="#fff" />
          <path d="M1.500 0v2M4.500 0v2M.500 2.500h5v2l-1.500 1.500h-2L.500 4.500zM3 6v4h2" fill="none" stroke="#fff" />
        </svg>
      </button>
      <button aria-label="Volume" className="flex w-6 justify-center">
        <svg width="16" height="14" viewBox="0 0 16 14" aria-hidden="true">
          <path d="M.600 4.500H3l3.500-3.500v12L3 9.500H.600z" fill="none" stroke="#fff" />
          <path d="M8.500 5c1 1.200 1 2.800 0 4" fill="none" stroke="#fff" />
          <path d="M10.500 3c2 2.500 2 5.500 0 8M13 1.500c2.600 3.500 2.600 7.500 0 11" fill="none" stroke="#777" />
        </svg>
      </button>
      <button className="w-6 text-center font-['Liberation_Sans',sans-serif] text-[18px] leading-5 font-bold text-white text-shadow-[1px_0_0_#0a84ff,-1px_0_0_#0a84ff,0_1px_0_#0a84ff,0_-1px_0_#0a84ff]">E</button>
      <div className="w-[70px] text-center text-[11px] leading-[18px]">
        22:04
        <br />
        03/31/2020
      </div>
      <button aria-label="3 notifications" className="relative flex w-[46px] justify-center">
        <svg width="16" height="16" viewBox="0 0 16 16" className="mr-2" aria-hidden="true">
          <path d="M0 0h16v12h-5v4l-4-4H0z" fill="#fff" />
          <path d="M3 3.500h10M3 6h10M3 8.500h7" stroke="#222" />
        </svg>
        <span className="absolute top-[7px] left-[19px] flex size-4 items-center justify-center rounded-full border border-[#8f8f8f] bg-[#2b2e2d] text-[11px] leading-none">3</span>
      </button>
      <span className="mr-1 ml-0.5 h-10 w-px bg-[#6a6d6c]" />
    </div>
  </footer>
);

export default function App() {
  return (
    <div className="flex h-screen flex-col overflow-hidden bg-[#2d2d2d] font-['Open_Sans',sans-serif]">
      <TabStrip />
      <Toolbar />
      <BookmarkBar />
      <ChallengePage />
      <Taskbar />
    </div>
  );
}
